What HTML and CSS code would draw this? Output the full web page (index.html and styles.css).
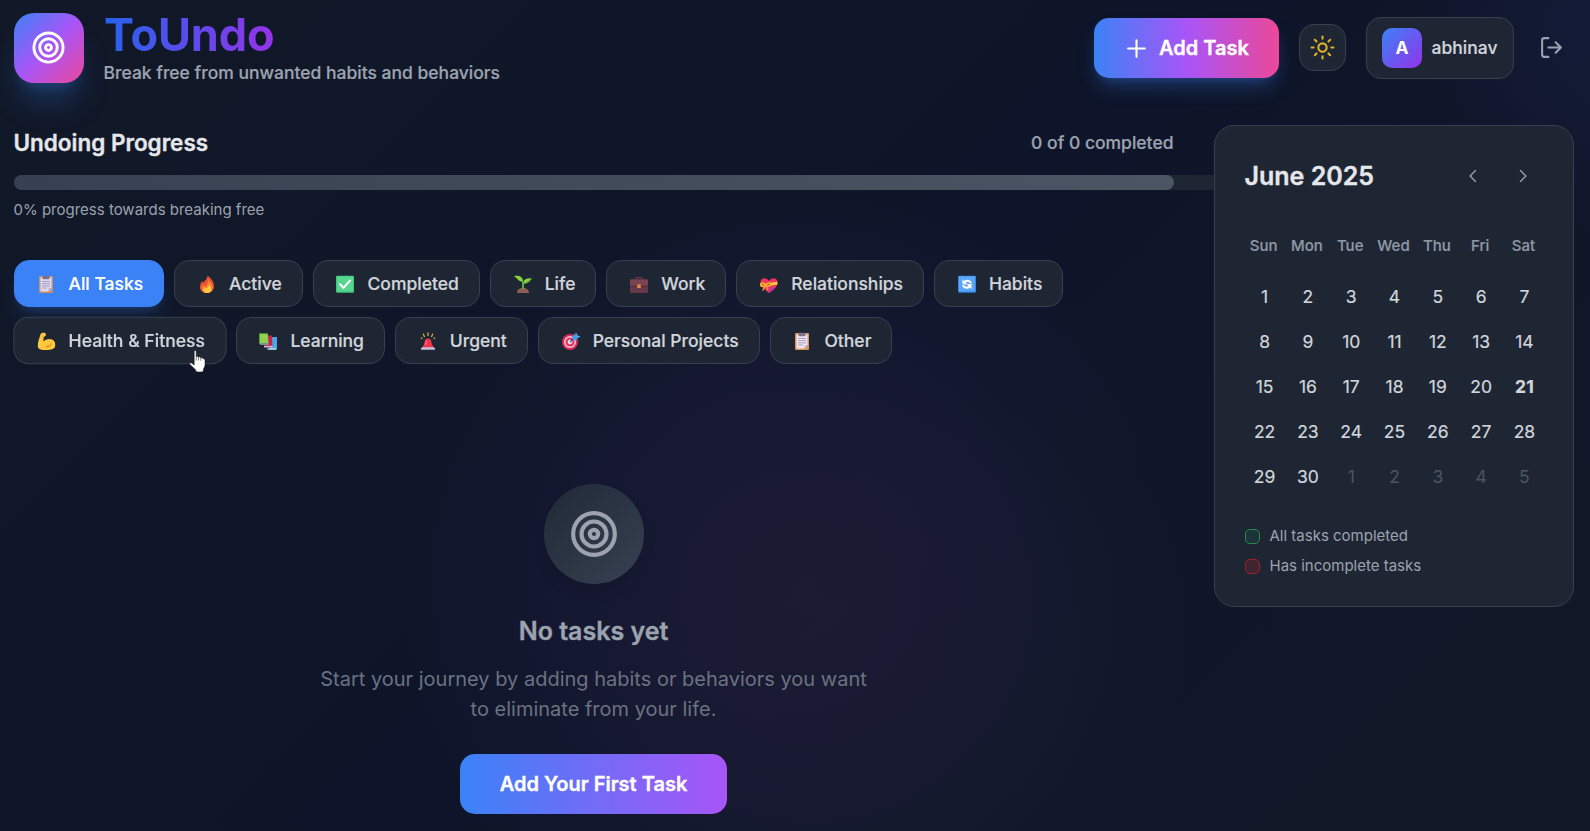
FILE: index.html
```html
<!DOCTYPE html>
<html lang="en">
<head>
<meta charset="utf-8">
<title>ToUndo</title>
<link rel="stylesheet" href="styles.css">
</head>
<body>
<svg class="defs" width="0" height="0">
  <symbol id="target" viewBox="0 0 24 24"><circle cx="12" cy="12" r="10"/><circle cx="12" cy="12" r="6"/><circle cx="12" cy="12" r="2"/></symbol>
  <symbol id="clipboard" viewBox="0 0 18 18"><rect x="2" y="1" width="14" height="17" rx="1" fill="#d9935f"/><path d="M3.5 2.5h11V13L11.5 16.5h-8z" fill="#efe5f3"/><path d="M14.5 13v.3l-3 3.2V13z" fill="#c9b8d6"/><rect x="5.5" y="0.8" width="7" height="3.4" rx="1" fill="#7b7189"/><path d="M5 6.5h8M5 8.7h8M5 10.9h8M5 13h5" stroke="#a596b8" stroke-width="0.9"/></symbol>
</svg>
<div class="page">
  <header class="header">
    <div class="brand">
      <div class="logo"><svg class="line logo-icon"><use href="#target"/></svg></div>
      <div class="brand-text">
        <h1 class="title">ToUndo</h1>
        <p class="subtitle">Break free from unwanted habits and behaviors</p>
      </div>
    </div>
    <div class="actions">
      <button class="add-task"><svg class="line" width="25" height="25" viewBox="0 0 24 24"><path d="M4 12h16M12 4v16"/></svg><span>Add Task</span></button>
      <button class="theme"><svg class="line" width="25" height="25" viewBox="0 0 24 24"><circle cx="12" cy="12" r="4"/><path d="M12 1.500v2M12 20.500v2M4.600 4.600l1.700 1.700M17.700 17.700l1.700 1.700M1.500 12h2M20.500 12h2M6.300 17.700l-1.700 1.700M19.400 4.600l-1.700 1.700"/></svg></button>
      <div class="user"><span class="avatar">A</span><span class="user-name">abhinav</span></div>
      <button class="logout"><svg class="line" width="25" height="25" viewBox="0 0 24 24"><path d="M9 21H5a2 2 0 0 1-2-2V5a2 2 0 0 1 2-2h4M16 17l5-5-5-5M21 12H9"/></svg></button>
    </div>
  </header>

  <div class="content">
    <main class="main">
      <section class="progress">
        <div class="progress-head"><h2>Undoing Progress</h2><span>0 of 0 completed</span></div>
        <div class="track"><div class="fill"></div></div>
        <p class="progress-note">0% progress towards breaking free</p>
      </section>

      <nav class="filters">
        <div class="filter-row">
          <button class="chip active"><svg class="emoji"><use href="#clipboard"/></svg>All Tasks</button>
          <button class="chip"><svg class="emoji" viewBox="0 0 18 18"><path d="M9.500.5c3 2.500 6.500 6 6.500 11 0 4-3 6.500-7 6.500s-7-2.300-7-6.300c0-2.700 1.300-4 2-6 .6.800.8 1.500.9 2.400C6.800 5.500 9.500 4 9.500.5z" fill="#ed5132"/><path d="M10 4.500c1.600 2.500 5 4.500 4.500 8.500-.4 3-2.500 5-5.500 5-3.300 0-5.200-1.800-5.200-4.500 0-1.700.7-2.700 1.600-3.800 1 .7 1.200 1.400 1.600 2.300C9 10 10.600 8 10 4.500z" fill="#f98530"/><path d="M11 9c.5 2 2.500 3 2.300 5.500-.2 2-1.800 3.500-4 3.500-2.300 0-3.800-1.300-3.800-3 0-1.200.6-1.900 1.200-2.600.7.400 1 .8 1.300 1.400C9.800 12.600 11 11 11 9z" fill="#ffc83d"/></svg>Active</button>
          <button class="chip"><svg class="emoji" viewBox="0 0 18 18"><rect width="18" height="17" y=".8" rx="1.300" fill="#3fc380"/><rect x="1" y="1.500" width="16" height="15" rx="1" fill="#58d68f"/><path d="M4 9.200l3.500 3.600L14 5.500" fill="none" stroke="#fff" stroke-width="2" stroke-linecap="round"/></svg>Completed</button>
          <button class="chip"><svg class="emoji" viewBox="0 0 18 18"><path d="M3 18q0-5 6-5t6 5z" fill="#8b5e55"/><path d="M9 14V7" stroke="#67b83b" stroke-width="1.800"/><path d="M0 1.200c4-1 8.500-.5 9.300 5.300C5 7.500 3.500 3 0 1.200z" fill="#86d33e"/><path d="M18 3.500c-4-.5-8.500.2-9 5.200 4.500.6 6.500-2 9-5.200z" fill="#6fbf3a"/><path d="M16 4c-3 .2-6 1-6.500 3.500z" fill="#9ae24e"/></svg>Life</button>
          <button class="chip"><svg class="emoji" viewBox="0 0 18 18"><path d="M6 5V3.600Q6 2.600 7 2.600h4q1 0 1 1V5" fill="none" stroke="#6b3a45" stroke-width="1.200"/><rect y="4.500" width="18" height="13.500" rx="1.200" fill="#65394a"/><path d="M0 5.700q0-1.200 1.200-1.200h15.600q1.200 0 1.200 1.200V11H0z" fill="#7a4452"/><path d="M0 11.200h18" stroke="#4a2937" stroke-width=".8"/><rect x="7.200" y="9.500" width="3.600" height="3.600" rx=".6" fill="#e08a45"/></svg>Work</button>
          <button class="chip"><svg class="emoji" viewBox="0 0 18 18"><path d="M9 18C4 14.500.5 11.500.5 7.500c0-5 6-5.500 8.500-1.500 2.500-4 8.500-3.500 8.500 1.500 0 4-3.500 7-8.500 10.500z" fill="#f0325e"/><path d="M9 18c2-1.400 3.500-2.600 5-4.200L9.500 11z" fill="#c632a0"/><path d="M.8 9.500L17.300 6.800l.2 2.800L1.500 12z" fill="#ffd044"/><path d="M6 10C3 6.500 0 8 .5 10.500c.5 1.500 3 .8 5.500-.5zM6 10c2-3.500 5.500-3 5 0-.4 1.500-2.800 1.200-5 0zM6 10l-3.500 5.500M6 10l2 5" fill="#f9a82f" stroke="#f9a82f" stroke-width="1.300"/><path d="M2 9.500l2 .7M7.500 9.700l2-.4" stroke="#b75a27"/></svg>Relationships</button>
          <button class="chip"><svg class="emoji" viewBox="0 0 18 18"><rect y=".8" width="18" height="17" rx="1.300" fill="#2d7fe3"/><rect x=".8" y="1.300" width="16.400" height="15.200" rx="1" fill="#5ba6f5"/><path d="M4.500 9.200V4.500l1.500 1.500c2.500-2.300 7-1.300 8 2.200h-2.300C10.800 6.500 9 6.400 7.700 7.600l1.600 1.600zM13.500 9v5L12 12.500c-2.500 2.300-7 1.300-8-2.200h2.300c.9 1.700 2.700 1.800 4 .6L8.700 9z" fill="#fff"/></svg>Habits</button>
        </div>
        <div class="filter-row">
          <button class="chip hovered"><svg class="emoji" viewBox="0 0 18 18"><path d="M3 2.200C4 .7 6.500.5 7.800 1.300c1 .8.6 2.600-.4 3.200l-1.300.5-.3 4.600c2-2.300 6-3.300 8.800-2 3 1.500 3.700 5 2.600 7.500C16 17.500 12 18 8 18c-3.500 0-7-.5-7.800-3C-.3 11 2 6 3 2.200z" fill="#ffc83d"/><path d="M8 14c2.500.3 5-.8 6-3-.3 3-2.500 4.600-5 4.500zM3.500 4l2.600.8" fill="#e69a28" stroke="#e69a28" stroke-width=".5"/></svg>Health &amp; Fitness</button>
          <button class="chip"><svg class="emoji" viewBox="0 0 18 18"><path d="M11 5h7v12.500h-7z" fill="#47a9e8"/><path d="M8.500 16.200H17v1.600H8.500z" fill="#b8d7ea"/><path d="M5.500 3.500h7.500l.5 11.500h-8z" fill="#c22552"/><path d="M5 13.800h8.500v1.700H5z" fill="#d4b7c8"/><path d="M.5 1.500h8.300l.7 10.500H.5z" fill="#8dd34f"/><path d="M.5 11h9v2h-8z" fill="#77958c"/><path d="M.5 1.500v10.500" stroke="#579c35"/></svg>Learning</button>
          <button class="chip"><svg class="emoji" viewBox="0 0 18 18"><path d="M4.500 14.500L6 8.500Q6.300 6.500 9 6.500t3 2l1.500 6z" fill="#f5344c"/><path d="M7.500 9l-1 5" stroke="#ff7b86" stroke-width="1.200"/><path d="M3.500 15h11l1.500 1.200v1.600H2v-1.600z" fill="#c9bdd9"/><path d="M4 13.200h10v2H4z" fill="#f5344c"/><path d="M9 4V.6M5.500 5L4.300 1.600M12.500 5l1.200-3.400M3.300 7L2 5.600M14.700 7L16 5.600" stroke="#eec04d" stroke-width="1.100"/></svg>Urgent</button>
          <button class="chip"><svg class="emoji" viewBox="0 0 18 18"><circle cx="8" cy="10" r="8" fill="#d92c59"/><circle cx="8" cy="10" r="6" fill="#f7c9d8"/><circle cx="8" cy="10" r="4.600" fill="#e43a63"/><circle cx="8" cy="10" r="2.300" fill="#f7dce5"/><path d="M8 10l5-5" stroke="#1f5e9b" stroke-width="1.300"/><path d="M10.200 5l3-4 .8 2.600L17.800 4l-3.600 4-3 .2z" fill="#3f9ee8"/><path d="M14 1l1 3 3 .8" fill="none" stroke="#5cb2f0"/></svg>Personal Projects</button>
          <button class="chip"><svg class="emoji"><use href="#clipboard"/></svg>Other</button>
        </div>
      </nav>

      <section class="empty">
        <div class="empty-icon"><svg class="line" width="50" height="50"><use href="#target"/></svg></div>
        <h3>No tasks yet</h3>
        <p>Start your journey by adding habits or behaviors you want to eliminate from your life.</p>
        <button class="first-task">Add Your First Task</button>
      </section>
    </main>

    <aside class="calendar">
      <div class="cal-head">
        <h2>June 2025</h2>
        <div class="cal-nav">
          <svg class="line" width="20" height="20" viewBox="0 0 24 24"><path d="M15 18.500l-6.500-6.500L15 5.500"/></svg>
          <svg class="line" width="20" height="20" viewBox="0 0 24 24"><path d="M9 18.500l6.500-6.500L9 5.500"/></svg>
        </div>
      </div>
      <div class="grid weekdays"><span>Sun</span><span>Mon</span><span>Tue</span><span>Wed</span><span>Thu</span><span>Fri</span><span>Sat</span></div>
      <div class="grid days">
        <span>1</span><span>2</span><span>3</span><span>4</span><span>5</span><span>6</span><span>7</span>
        <span>8</span><span>9</span><span>10</span><span>11</span><span>12</span><span>13</span><span>14</span>
        <span>15</span><span>16</span><span>17</span><span>18</span><span>19</span><span>20</span><span class="today">21</span>
        <span>22</span><span>23</span><span>24</span><span>25</span><span>26</span><span>27</span><span>28</span>
        <span>29</span><span>30</span><span class="out">1</span><span class="out">2</span><span class="out">3</span><span class="out">4</span><span class="out">5</span>
      </div>
      <div class="legend">
        <div><i class="swatch done"></i>All tasks completed</div>
        <div><i class="swatch pending"></i>Has incomplete tasks</div>
      </div>
    </aside>
  </div>
  <svg class="cursor" viewBox="0 0 17 23"><path d="M5.200 1.500Q5.200.5 6.200.5t1 1v5q1.500-.8 2 .5 1.500-.6 2.100.7 1.700-.6 2.300.8 2.400-.4 2.400 2V15c0 2-1.500 3-1.700 5v1.500q-3.800 1.200-7.500 0V20L1 14.500q-1.200-2 .8-1.800.8.200 3.400 2.300z" fill="#fff" stroke="#111" stroke-width=".5"/><path d="M7.300 6.500v4M9.500 7v3.500M11.700 7.700v3" stroke="#333" stroke-width=".6"/></svg>
</div>
</body>
</html>
```
FILE: styles.css
```css
* { box-sizing: border-box; }
body { margin: 0; overflow: hidden; background: #0f1729; }
h1, h2, h3, p { margin: 0; }
button { font: inherit; color: inherit; border: 0; background: none; padding: 0; }
svg { display: block; flex: none; }
.defs { position: absolute; }
.line { fill: none; stroke: currentColor; stroke-width: 2; stroke-linecap: round; stroke-linejoin: round; }

.page {
  position: relative;
  width: 1590px;
  height: 831px;
  padding: 13px 16px 0 14px;
  font-family: Inter, "Liberation Sans", sans-serif;
  font-size: 17.5px;
  color: #d1d5db;
  background:
    radial-gradient(circle at 800px 590px, rgba(160, 80, 140, 0.09), rgba(150, 80, 170, 0.07) 150px, transparent 400px),
    radial-gradient(circle at 1630px 20px, rgba(80, 85, 230, 0.09), transparent 220px),
    linear-gradient(135deg, #111827 0%, #0e152a 50%, #111827 100%);
}

.header { display: flex; justify-content: space-between; height: 70px; }
.brand { display: flex; gap: 20px; }
.logo {
  display: flex; align-items: center; justify-content: center;
  width: 70px; height: 70px; padding: 0 1px 1px 0; border-radius: 20px; color: #fff;
  background: linear-gradient(135deg, #3b82f6, #a855f7 50%, #ec4899);
  box-shadow: 0 25px 31px -6px rgba(59, 130, 246, 0.25), 0 10px 12px -7px rgba(59, 130, 246, 0.25);
}
.logo-icon { width: 35px; height: 35px; }
.title {
  width: max-content; margin-top: -3px; letter-spacing: -0.1px;
  font-size: 45px; line-height: 50px; font-weight: 700;
  color: transparent;
  background: linear-gradient(90deg, #2563eb, #9333ea);
  -webkit-background-clip: text; background-clip: text;
}
.subtitle { margin-left: -0.5px; font-weight: 500; line-height: 25px; color: #9ca3af; }
.actions { display: flex; align-items: center; margin-right: 10px; }
.add-task {
  display: flex; align-items: center; justify-content: center; gap: 10px;
  width: 185px; height: 60px; margin-right: 20px; border-radius: 15px;
  font-size: 20px; font-weight: 600; color: #fff;
  background: linear-gradient(90deg, #3b82f6, #a855f7 50%, #ec4899);
  box-shadow: 0 12px 19px -4px rgba(59, 130, 246, 0.3), 0 5px 8px -5px rgba(59, 130, 246, 0.3);
}
.theme, .user, .calendar, .chip { background: #1e2634; border: 1px solid #36404e; }
.theme {
  display: flex; align-items: center; justify-content: center;
  width: 47px; height: 47px; margin: -1px 20px 0 0; border-radius: 15px; color: #dfb02a;
}
.user {
  display: flex; align-items: center; gap: 9.5px;
  width: 148px; height: 62px; padding-left: 15px; margin-right: 25px; border-radius: 15px;
}
.avatar {
  display: flex; align-items: center; justify-content: center;
  width: 40px; height: 40px; padding-bottom: 1px; border-radius: 10px;
  font-weight: 700; color: #fff; background: linear-gradient(135deg, #3b82f6, #9333ea);
}
.user-name { margin-top: -1px; font-weight: 500; }
.logout { margin-top: -1px; color: #9ca3af; }

/* Slightly heavier strokes on small interface text */
.add-task, .first-task, .progress-head h2, .cal-head h2, .empty h3 { -webkit-text-stroke: 0.35px currentColor; }
.chip, .user-name, .subtitle, .progress-head span, .weekdays, .days { -webkit-text-stroke: 0.2px currentColor; }

.content { display: flex; justify-content: space-between; padding-top: 42px; }
.main { width: 1160px; }
.progress-head { display: flex; justify-content: space-between; align-items: center; height: 34px; margin: 0 0.5px 0 -0.5px; }
.progress-head h2 { font-size: 22.5px; font-weight: 600; color: #e5e7eb; }
.progress-head span { font-weight: 500; color: #9ca3af; }
.track { width: 1240px; margin-top: 16px; border-radius: 8px; background: #1e2533; }
.fill { width: 1160px; height: 15px; border-radius: 8px; background: linear-gradient(90deg, #374151, #4b5563); }
.progress-note { margin: 10px 0 0 -0.5px; font-size: 15px; line-height: 20px; color: #9ca3af; }

.filters { display: flex; flex-direction: column; gap: 10px; margin-top: 40px; }
.filter-row { display: flex; gap: 10px; }
.chip {
  display: flex; align-items: center; height: 47px; padding: 0 20px;
  border-radius: 15px; font-weight: 500; white-space: nowrap;
}
.chip.active {
  color: #fff; background: #3b82f6; border-color: #3b82f6;
  box-shadow: 0 12px 19px -4px rgba(59, 130, 246, 0.2), 0 5px 8px -5px rgba(59, 130, 246, 0.25);
}
.chip.hovered { transform: scale(1.006); }
.emoji { width: 18px; height: 18px; margin: 0 13.1px 0 2.75px; }
.active .emoji { margin-left: 2.4px; opacity: 0.9; }

.empty { display: flex; flex-direction: column; align-items: center; padding: 120px 1px 0 0; text-align: center; }
.empty-icon {
  display: flex; align-items: center; justify-content: center;
  width: 100px; height: 100px; border-radius: 50%; color: #9ca3af;
  background: linear-gradient(135deg, #1f2937, #374151);
  box-shadow: 0 10px 15px -3px rgba(0, 0, 0, 0.12);
}
.empty h3 { margin-top: 30px; font-size: 25px; line-height: 35px; font-weight: 600; color: #9ca3af; }
.empty p { width: 560px; margin-top: 15px; font-size: 20px; line-height: 30px; color: #6b7280; }
.first-task {
  width: 267px; height: 60px; margin-top: 30px; border-radius: 15px;
  font-size: 20px; font-weight: 600; color: #fff;
  background: linear-gradient(90deg, #3b82f6, #a855f7);
}

.calendar { position: relative; width: 360px; height: 482px; padding: 30px 29px; border-radius: 20px; }
.cal-head { display: flex; align-items: center; justify-content: space-between; height: 40px; padding-left: 0.5px; }
.cal-head h2 { font-size: 25px; font-weight: 600; color: #e5e7eb; }
.cal-nav { display: flex; gap: 30px; margin-right: 11px; color: #9ca3af; }
.cal-nav .line { stroke-width: 1.6; }
.grid { display: grid; grid-template-columns: repeat(7, 43.3px); justify-content: center; text-align: center; }
.weekdays { height: 40px; margin: 30px 1px 0 0; line-height: 40px; font-size: 15px; font-weight: 500; color: #8f97a4; }
.days { margin-top: 8px; padding-left: 1px; grid-auto-rows: 45px; line-height: 45px; }
.today { font-weight: 700; }
.out { color: #4b5563; -webkit-text-stroke: 0; }
.legend { display: flex; flex-direction: column; gap: 10px; margin: 27px 0 0 1px; font-size: 15px; line-height: 20px; color: #9ca3af; }
.legend div { display: flex; align-items: center; gap: 9.5px; }
.swatch { width: 15px; height: 15px; border-radius: 5px; border: 1px solid; }
.done { border-color: #258a4b; background: #1c3438; }
.pending { border-color: #a31f24; background: #3e2530; }
.cursor { position: absolute; left: 189px; top: 350px; width: 17px; height: 23px; }
```
